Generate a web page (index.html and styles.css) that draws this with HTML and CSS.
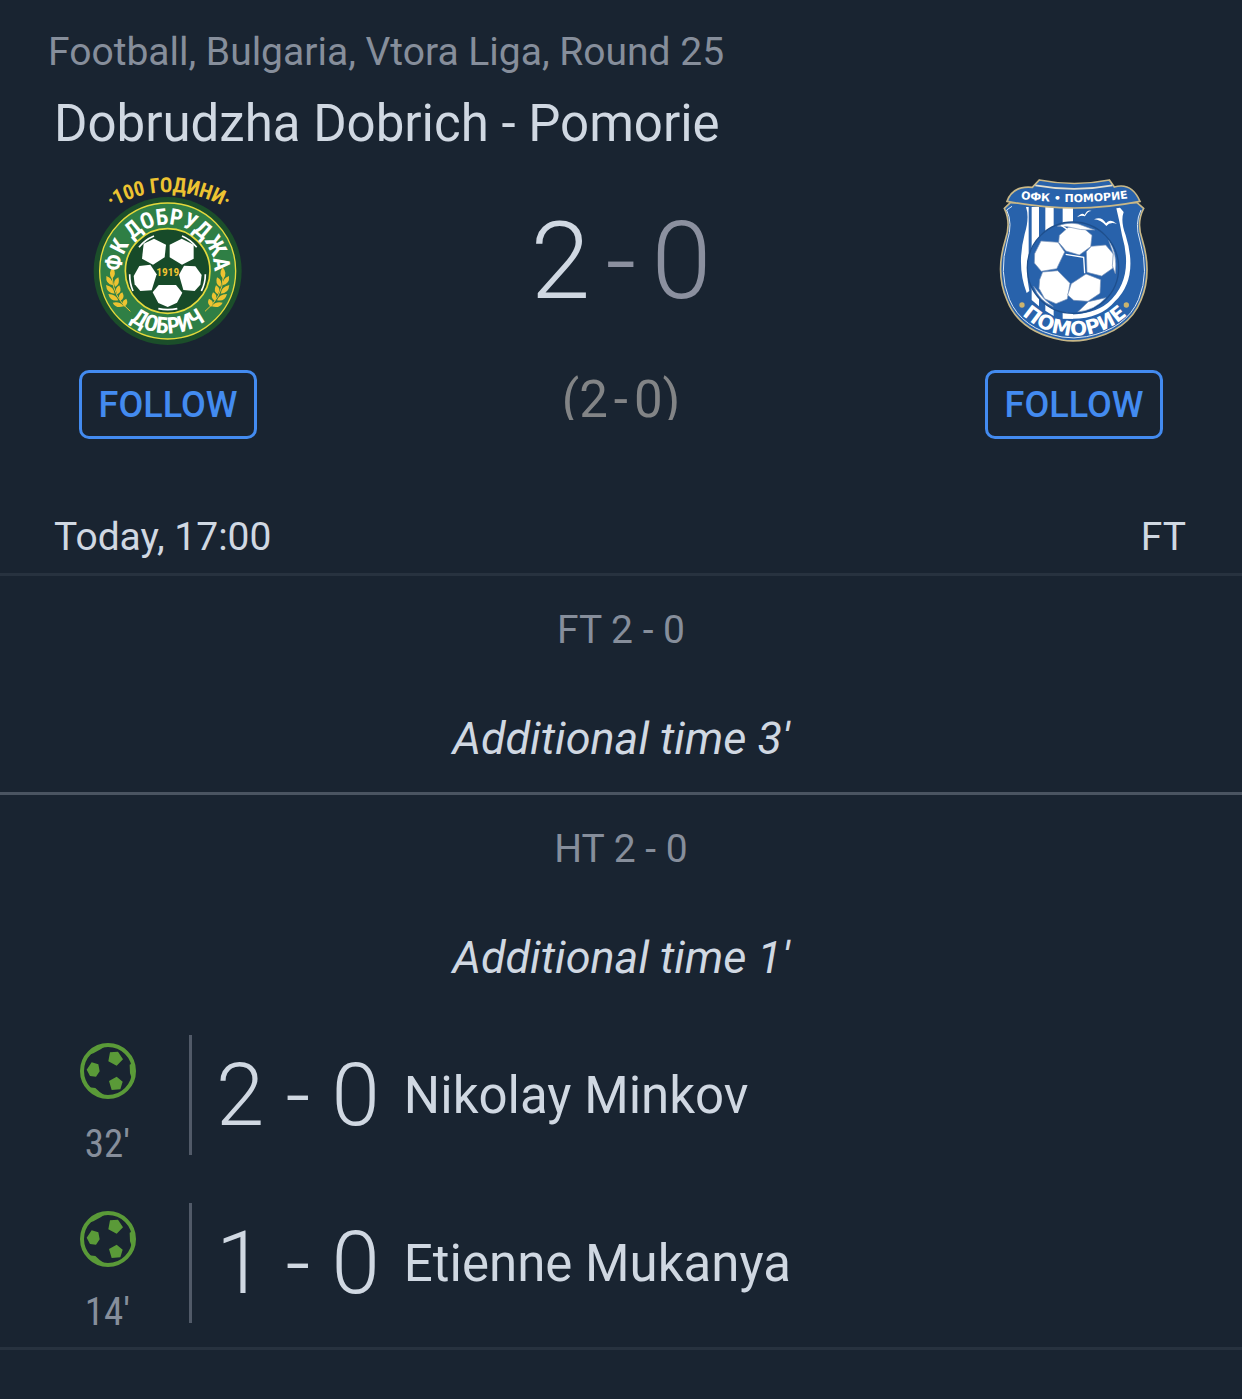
FILE: index.html
```html
<!DOCTYPE html>
<html lang="en">
<head>
    <meta charset="UTF-8">
    <meta name="viewport" content="width=device-width, initial-scale=1.0">
    <title>Dobrudzha Dobrich - Pomorie</title>
    <link rel="stylesheet" href="styles.css">
</head>
<body>
    <!-- shared ball icon for the goals -->
    <svg width="0" height="0" class="defs">
        <symbol id="ball" viewBox="0 0 168 168">
            <circle cx="84" cy="84" r="78" fill="none" stroke="#5a9a38" stroke-width="12"/>
            <path fill="#5a9a38" d="M90 28L114 26L129 49L110 68L85 55ZM35 58L55 64L59 85L48 101L30 99L20 80ZM110 101L128 116L121 139L95 141L87 114ZM27 35L45 15L76 10L62 19L40 31ZM27 133L46 135L60 148L76 158L45 151ZM158 60L149 65L150 91L156 108Z"/>
        </symbol>
    </svg>

    <header class="match">
        <p class="league">Football, Bulgaria, Vtora Liga, Round 25</p>
        <h1 class="title">Dobrudzha Dobrich - Pomorie</h1>
        <div class="teams">
            <div class="team">
                <svg class="crest" viewBox="-3 0 534 570" role="img" aria-label="Dobrudzha Dobrich">
                    <defs>
                        <path id="years" d="M80 137Q262 25 454 137"/>
                        <path id="dob-top" d="M125 342A140 140 0 1 1 401 342"/>
                        <path id="dob-bottom" d="M113 430A187 187 0 0 0 413 430"/>
                        <g id="wheat" fill="#edc331">
                            <path d="M98 307Q82 326 96 342Q112 328 98 307ZM79 333Q76 357 99 361Q99 340 79 333ZM78 360Q80 386 104 386Q102 365 78 360ZM85 387Q91 411 115 406Q109 388 85 387ZM98 413Q108 432 131 424Q120 408 98 413ZM115 337Q96 346 105 366Q122 358 115 337ZM118 361Q101 370 112 388Q128 381 118 361ZM127 382Q110 390 121 407Q137 400 127 382ZM139 401Q120 408 132 425Q148 417 139 401Z"/>
                            <path d="M96 335Q100 399 151 439" fill="none" stroke="#edc331" stroke-width="3"/>
                        </g>
                    </defs>
                    <circle cx="263" cy="318" r="222" fill="#1b4e2a"/>
                    <circle cx="263" cy="318" r="204" fill="#2f7f45" stroke="#e4d93c" stroke-width="4"/>
                    <circle cx="263" cy="318" r="127" fill="#174a29" stroke="#e4d93c" stroke-width="5"/>
                    <g fill="#fff">
                        <path d="M191 236L222 221L258 239L254 277L219 299L186 281Z"/>
                        <path d="M269 239L305 221L341 239L341 281L306 299L269 277Z"/>
                        <path d="M161 333L178 303L211 299L230 328L215 376L181 378L164 358Z"/>
                        <path d="M297 329L312 302L346 304L365 330L361 359L344 378L310 375Z"/>
                        <path d="M218 382L236 360L288 360L307 383L291 413L263 426L235 414Z"/>
                    </g>
                    <path d="M177 247Q193 225 222 213M306 213Q332 224 350 247M149 328Q149 356 159 378M376 328Q376 356 364 378M235 431Q263 437 292 431" fill="none" stroke="#fff" stroke-width="5"/>
                    <use href="#wheat"/>
                    <use href="#wheat" transform="translate(526 0) scale(-1 1)"/>
                    <text class="crest-year" x="263" y="332" text-anchor="middle">1919</text>
                    <text class="crest-gold"><textPath href="#years" startOffset="50%" text-anchor="middle">·100 ГОДИНИ·</textPath></text>
                    <text class="crest-white"><textPath href="#dob-top" startOffset="50%" text-anchor="middle">ФК ДОБРУДЖА</textPath></text>
                    <text class="crest-white"><textPath href="#dob-bottom" startOffset="50%" text-anchor="middle">ДОБРИЧ</textPath></text>
                </svg>
                <button class="follow">FOLLOW</button>
            </div>
            <div class="result">
                <div class="score"><span class="winner">2</span><span>-</span><span>0</span></div>
                <div class="half"><span>(2</span><span>-</span><span>0)</span></div>
            </div>
            <div class="team">
                <svg class="crest" viewBox="0 0 534 570" role="img" aria-label="Pomorie">
                    <defs>
                        <path id="pom-top" d="M85 99Q268 125 451 97"/>
                        <path id="pom-bottom" d="M100 438A230 230 0 0 0 438 438"/>
                        <clipPath id="pom-ball"><circle cx="262" cy="308" r="136"/></clipPath>
                    </defs>
                    <path d="M76 113L58 130Q79 173 61 225Q30 324 66 405Q103 501 231 525Q266 531 304 524Q430 500 468 405Q502 324 472 225Q453 174 476 130L456 113Z" fill="#2862ab" stroke="#c9b887" stroke-width="5"/>
                    <path d="M81 124L65 135Q84 175 67 228Q40 323 73 403Q110 492 231 516Q266 522 304 515Q423 492 461 403Q494 322 465 228Q448 175 468 135" fill="none" stroke="#dbe7f3" stroke-width="3"/>
                    <path d="M123 126Q134 157 119 207Q94 302 125 384L133 378Q121 317 131 274L131 126ZM140 126H162V424L140 405ZM181 126H206V453L181 437ZM233 126H264V461H233Z" fill="#fff"/>
                    <path d="M394 130Q404 171 411 211Q449 342 369 413Q323 451 234 449V460Q340 470 390 409Q462 340 422 211Q406 169 416 141L405 128Z" fill="#fff"/>
                    <path d="M163 45Q268 66 373 45L388 66Q440 51 465 109Q366 129 268 129Q167 128 66 109Q84 61 142 67Z" fill="#2862ab" stroke="#c9b887" stroke-width="5"/>
                    <path d="M151 61Q268 82 382 61" fill="none" stroke="#e3dfcf" stroke-width="5"/>
                    <path d="M276 157Q291 140 299 150Q307 133 320 138Q308 138 300 154Q287 149 276 157ZM327 163Q350 152 363 175Q374 158 396 177Q375 169 364 183Q346 163 327 163Z" fill="#fff"/>
                    <circle cx="264" cy="308" r="137" fill="#2862ab" stroke="#1e4f8d" stroke-width="4"/>
                    <g clip-path="url(#pom-ball)" fill="#fff" stroke="#7892b8" stroke-width="2">
                        <path d="M223 211L250 187L294 188L321 211L317 245L283 270L243 258L221 232Z"/>
                        <path d="M149 266L168 228L219 232L239 261L215 311L169 319L148 294Z"/>
                        <path d="M304 260L319 244L362 240L385 267L384 309L350 333L306 322Z"/>
                        <path d="M164 344L173 321L218 317L255 355L247 402L213 416L179 401L162 370Z"/>
                        <path d="M259 356L303 327L347 344L345 385L309 409L266 406L248 390Z"/>
                        <path d="M217 184Q248 170 280 177L329 195Q285 197 247 185ZM371 226Q398 264 391 326L382 302L385 266ZM146 364L179 403L205 425Q163 409 146 364ZM363 398Q330 436 278 441L310 410Z"/>
                    </g>
                    <path d="M242 268L296 277L299 325M229 181L248 194L234 211" fill="none" stroke="#fff" stroke-width="4"/>
                    <circle cx="111" cy="420" r="8" fill="#cbb46e"/>
                    <circle cx="424" cy="420" r="8" fill="#cbb46e"/>
                    <text class="pom-small"><textPath href="#pom-top" startOffset="50%" text-anchor="middle">ОФК • ПОМОРИЕ</textPath></text>
                    <text class="pom-large"><textPath href="#pom-bottom" startOffset="50%" text-anchor="middle">ПОМОРИЕ</textPath></text>
                </svg>
                <button class="follow">FOLLOW</button>
            </div>
        </div>
        <div class="status">
            <span>Today, 17:00</span>
            <span>FT</span>
        </div>
    </header>

    <main>
        <section class="period">
            <h2 class="period-score">FT 2 - 0</h2>
            <p class="added">Additional time 3'</p>
        </section>
        <section class="period last">
            <h2 class="period-score">HT 2 - 0</h2>
            <p class="added">Additional time 1'</p>
            <div class="goal">
                <div class="time">
                    <svg class="ball" aria-hidden="true"><use href="#ball"/></svg>
                    <span>32'</span>
                </div>
                <div class="goal-info">
                    <span class="goal-score">2 - 0</span>
                    <span class="player">Nikolay Minkov</span>
                </div>
            </div>
            <div class="goal">
                <div class="time">
                    <svg class="ball" aria-hidden="true"><use href="#ball"/></svg>
                    <span>14'</span>
                </div>
                <div class="goal-info">
                    <span class="goal-score">1 - 0</span>
                    <span class="player">Etienne Mukanya</span>
                </div>
            </div>
        </section>
    </main>
</body>
</html>
```
FILE: styles.css
```css
*{
    box-sizing: border-box;
}
body{
    margin: 0;
    background-color: #192431;
    color: #d0d8e2;
    font-family: Roboto, sans-serif;
    font-size: 39px;
}
h1, h2, p{
    margin: 0;
    font-weight: 400;
}
.defs{
    display: block;
}
.match{
    border-bottom: 3px solid #27323f;
}
.league{
    padding: 24px 48px 0;
    line-height: 56px;
    color: #868e9b;
}
.title{
    padding: 12px 54px 0;
    font-size: 51px;
    line-height: 64px;
}
.teams{
    display: flex;
    justify-content: space-between;
    padding: 9px 79px 0;
}
.team{
    display: flex;
    flex-direction: column;
    align-items: center;
    width: 178px;
}
.crest{
    width: 178px;
    height: 190px;
}
.follow{
    width: 178px;
    height: 69px;
    margin-top: 15px;
    padding: 0;
    background-color: transparent;
    border: 3px solid #438bf0;
    border-radius: 10px;
    color: #438bf0;
    font-family: Roboto, sans-serif;
    font-size: 36px;
    font-weight: 500;
    cursor: pointer;
}
.result{
    display: flex;
    flex-direction: column;
    align-items: center;
    padding-top: 32px;
}
.score{
    display: flex;
    gap: 15px;
    color: #8b909f;
    font-size: 108px;
    font-weight: 300;
    line-height: 128px;
}
.winner{
    color: #d0d8e2;
}
.half{
    display: flex;
    gap: 6px;
    height: 48px;
    margin-top: 47px;
    overflow: hidden;
    color: #828486;
    font-size: 51px;
    line-height: 56px;
}
.status{
    display: flex;
    justify-content: space-between;
    padding: 70px 56px 8px 54px;
    line-height: 56px;
}
.period{
    border-bottom: 3px solid #4a5461;
    text-align: center;
}
.last{
    border-bottom-color: #27323f;
}
.period-score{
    padding-top: 26px;
    color: #868e9b;
    font-size: 39px;
    line-height: 56px;
}
.added{
    padding: 49px 0 21px;
    font-size: 45px;
    font-style: italic;
    line-height: 64px;
}
.goal{
    display: flex;
    align-items: flex-start;
    padding: 24px 26px 12px;
    text-align: left;
}
.time{
    display: flex;
    flex-direction: column;
    align-items: center;
    width: 163px;
    padding-top: 8px;
    color: #868e9b;
    font-family: "Roboto Condensed", Roboto, sans-serif;
    font-stretch: condensed;
    line-height: 46px;
}
.ball{
    width: 56px;
    height: 56px;
    margin-bottom: 22px;
}
.goal-info{
    display: flex;
    align-items: center;
    gap: 24px;
    height: 120px;
    padding-left: 24px;
    border-left: 3px solid #515a68;
}
.goal-score{
    font-size: 87px;
    font-weight: 300;
}
.player{
    font-size: 51px;
}
.crest-gold, .crest-white, .crest-year{
    font-family: "Roboto Condensed", Roboto, sans-serif;
    font-weight: 700;
}
.crest-gold{
    fill: #edc331;
    font-size: 62px;
}
.crest-white{
    fill: #ffffff;
    font-size: 68px;
}
.crest-year{
    fill: #edc331;
    font-size: 34px;
}
.pom-small, .pom-large{
    fill: #ffffff;
    font-family: "DejaVu Sans", sans-serif;
    font-weight: 700;
}
.pom-small{
    font-size: 33px;
}
.pom-large{
    font-size: 60px;
}
```
